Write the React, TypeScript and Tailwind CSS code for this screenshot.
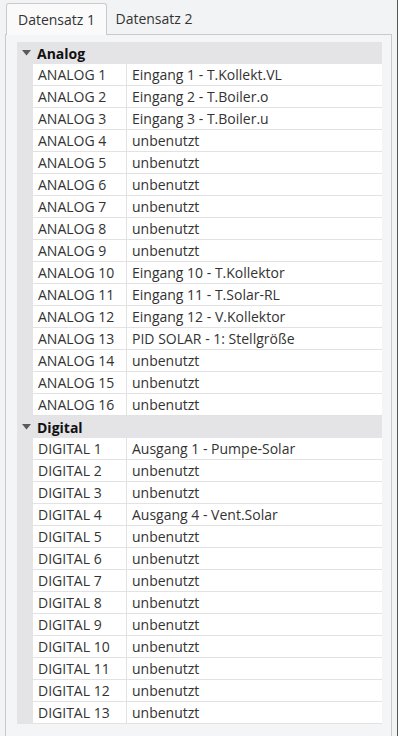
import { ChevronDown } from 'lucide-react';

const analog = [
    ['ANALOG 1', 'Eingang 1 - T.Kollekt.VL'],
    ['ANALOG 2', 'Eingang 2 - T.Boiler.o'],
    ['ANALOG 3', 'Eingang 3 - T.Boiler.u'],
    ['ANALOG 4', 'unbenutzt'],
    ['ANALOG 5', 'unbenutzt'],
    ['ANALOG 6', 'unbenutzt'],
    ['ANALOG 7', 'unbenutzt'],
    ['ANALOG 8', 'unbenutzt'],
    ['ANALOG 9', 'unbenutzt'],
    ['ANALOG 10', 'Eingang 10 - T.Kollektor'],
    ['ANALOG 11', 'Eingang 11 - T.Solar-RL'],
    ['ANALOG 12', 'Eingang 12 - V.Kollektor'],
    ['ANALOG 13', 'PID SOLAR - 1: Stellgröße'],
    ['ANALOG 14', 'unbenutzt'],
    ['ANALOG 15', 'unbenutzt'],
    ['ANALOG 16', 'unbenutzt'],
];

const digital = [
    ['DIGITAL 1', 'Ausgang 1 - Pumpe-Solar'],
    ['DIGITAL 2', 'unbenutzt'],
    ['DIGITAL 3', 'unbenutzt'],
    ['DIGITAL 4', 'Ausgang 4 - Vent.Solar'],
    ['DIGITAL 5', 'unbenutzt'],
    ['DIGITAL 6', 'unbenutzt'],
    ['DIGITAL 7', 'unbenutzt'],
    ['DIGITAL 8', 'unbenutzt'],
    ['DIGITAL 9', 'unbenutzt'],
    ['DIGITAL 10', 'unbenutzt'],
    ['DIGITAL 11', 'unbenutzt'],
    ['DIGITAL 12', 'unbenutzt'],
    ['DIGITAL 13', 'unbenutzt'],
];

function Group({ title, rows }: { title: string; rows: string[][] }) {
    return (
        <div>
            {/* Group header */}
            <div className="h-[22px] bg-[#e4e4e6] flex items-center">
                <div className="w-[16px] flex justify-center pl-[3px]">
                    <svg width="9" height="6" viewBox="0 0 9 6">
                        <path d="M0 0 L9 0 L4.5 5.5 Z" fill="#5a5a5a" />
                    </svg>
                </div>
                <span className="ml-[4px] font-bold text-[#111] text-[14px]">{title}</span>
            </div>
            {/* Rows */}
            <div className="flex">
                <div className="w-[16px] bg-[#e4e4e6]" />
                <div className="flex-1">
                    {rows.map(([name, value], idx) => (
                        <div key={idx} className="h-[22px] flex bg-white border-b border-[#e2e2e2]">
                            <div className="w-[94px] px-[5px] flex items-center border-r border-[#e2e2e2]">{name}</div>
                            <div className="flex-1 px-[5px] flex items-center whitespace-nowrap">{value}</div>
                        </div>
                    ))}
                </div>
            </div>
        </div>
    );
}

export default function App() {
    return (
        <div
            className="w-[398px] h-[736px] overflow-hidden bg-[#f2f3f5] text-[14px] text-[#333] border-r border-[#555] flex flex-col"
            style={{ fontFamily: '"Open Sans", "DejaVu Sans", sans-serif' }}
        >
            {/* Tabs */}
            <div className="flex pl-[6px] pt-[3px] h-[34px] shrink-0">
                <div className="w-[101px] bg-[#fafafb] border border-[#c9cacc] border-b-0 rounded-t-[3px] flex items-center justify-center relative z-10 -mb-px">
                    Datensatz 1
                </div>
                <div className="w-[94px] flex items-center justify-center">Datensatz 2</div>
            </div>
            {/* Panel */}
            <div className="flex-1 ml-[5px] mr-[5px] border border-[#c9cacc] border-b-0 bg-[#f4f5f7] pl-[11px] pr-[9px] pt-[7px]">
                <Group title="Analog" rows={analog} />
                <Group title="Digital" rows={digital} />
            </div>
        </div>
    );
}
